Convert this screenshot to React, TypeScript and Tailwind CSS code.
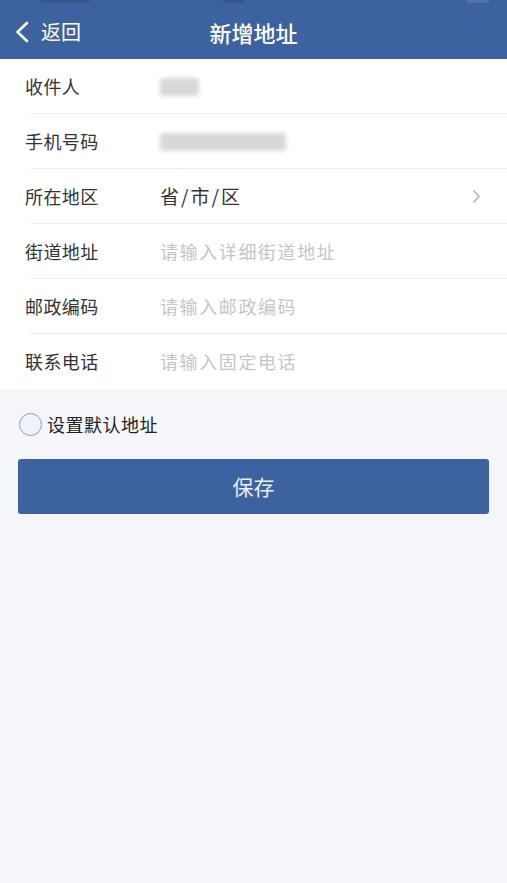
import React from 'react';

const font = { fontFamily: '"Noto Sans CJK SC", "Noto Sans", sans-serif' };

type Row = {
  label: string;
  value?: string;
  placeholder?: string;
  blur?: number;
  arrow?: boolean;
};

const rows: Row[] = [
  { label: '收件人', blur: 39 },
  { label: '手机号码', blur: 126 },
  { label: '所在地区', value: '省/市/区', arrow: true },
  { label: '街道地址', placeholder: '请输入详细街道地址' },
  { label: '邮政编码', placeholder: '请输入邮政编码' },
  { label: '联系电话', placeholder: '请输入固定电话' },
];

const FormRow: React.FC<{ row: Row; last: boolean }> = ({ row, last }) => (
  <div className="relative flex h-[55px] items-center pl-[25px] pr-[26px]">
    <span className="w-[135px] text-[18px] tracking-[0.4px] text-[#333333]">{row.label}</span>
    <div className="flex flex-1 items-center">
      {row.blur && (
        <div
          className="h-[18px] rounded-[2px] bg-[#d8d8d8] blur-[2px]"
          style={{ width: row.blur }}
        />
      )}
      {row.value && (
        <span className="text-[19px] text-[#333333]">
          省<span className="mx-[2px]">/</span>市<span className="mx-[2px]">/</span>区
        </span>
      )}
      {row.placeholder && (
        <span className="text-[18px] tracking-[1.6px] text-[#c6c6c6]">{row.placeholder}</span>
      )}
    </div>
    {row.arrow && (
      <svg width="9" height="15" viewBox="0 0 9 15">
        <path d="M1.5 1.5 L7 7.5 L1.5 13.5" fill="none" stroke="#b5b5b5" strokeWidth="1.6" />
      </svg>
    )}
    {!last && <div className="absolute bottom-0 left-[30px] right-0 h-px bg-[#efefef]" />}
  </div>
);

const App: React.FC = () => {
  return (
    <div className="min-h-[883px] w-full bg-[#f5f6f9]" style={font}>
      <div className="relative flex h-[59px] items-center bg-[#3d62a0] pt-[5px]">
        <div className="absolute left-[40px] top-0 h-[3px] w-[50px] rounded-b bg-[#2c3f63] opacity-30" />
        <div className="absolute left-[222px] top-0 h-[3px] w-[22px] rounded-b bg-[#2c3f63] opacity-30" />
        <div className="absolute right-[18px] top-0 h-[3px] w-[22px] bg-[#6f89b8] opacity-40" />
        <div className="flex items-center pl-[14px]">
          <svg width="16" height="22" viewBox="0 0 16 22">
            <path d="M13 2 L3.5 11 L13 20" fill="none" stroke="#ffffff" strokeWidth="2.6" strokeLinecap="round" strokeLinejoin="round" />
          </svg>
          <span className="ml-[11px] text-[20px] text-white">返回</span>
        </div>
        <span className="absolute left-1/2 -translate-x-1/2 text-[22px] font-medium text-white">新增地址</span>
      </div>
      <div className="bg-white">
        {rows.map((r, i) => (
          <FormRow key={r.label} row={r} last={i === rows.length - 1} />
        ))}
      </div>
      <div className="flex items-center pl-[19px] pt-[22px]">
        <div className="h-[23px] w-[23px] rounded-full border-[1.5px] border-[#8d9cb6] bg-[#eef3fb]" />
        <span className="ml-[5px] text-[18px] tracking-[0.5px] text-[#222222]">设置默认地址</span>
      </div>
      <div className="px-[18px] pt-[21px]">
        <button className="flex h-[55px] w-full items-center justify-center rounded-[3px] bg-[#3d62a0] text-[21px] text-[#e9eef7]">
          保存
        </button>
      </div>
    </div>
  );
};

export default App;
